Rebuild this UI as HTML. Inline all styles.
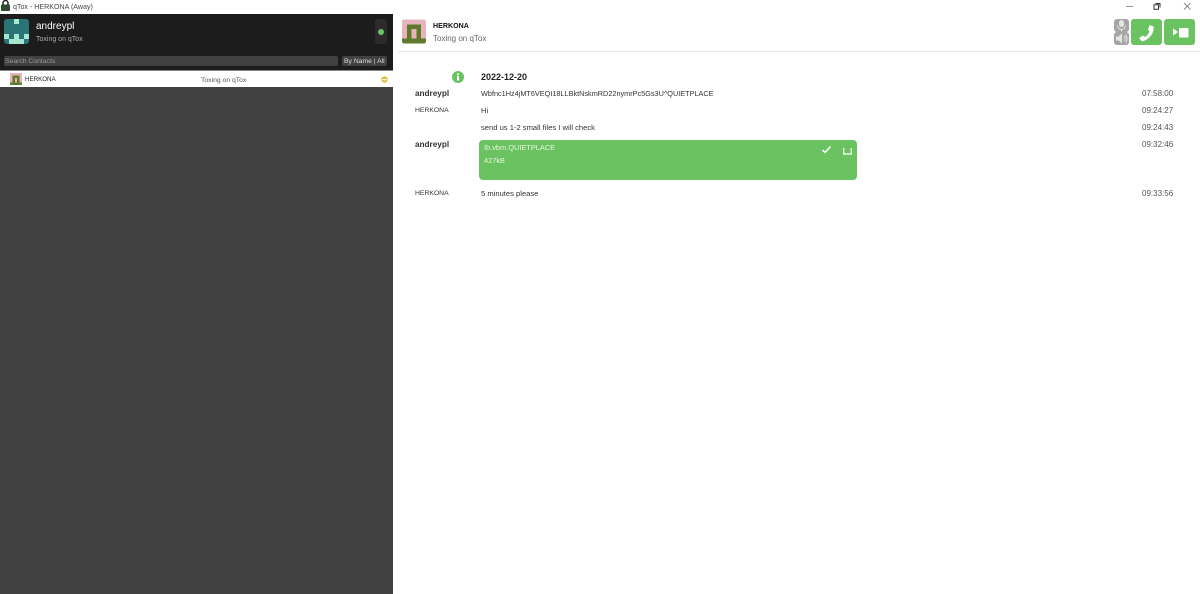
<!DOCTYPE html>
<html><head><meta charset="utf-8">
<style>
*{margin:0;padding:0;box-sizing:border-box}
html,body{width:1200px;height:594px;overflow:hidden;background:#fff;font-family:"Liberation Sans",sans-serif;color:#222}
.t{position:absolute;white-space:nowrap;font-size:7.5px;line-height:12px}
.b{position:absolute}
</style></head><body>
<svg class="b" style="left:1px;top:0" width="9" height="11" viewBox="0 0 9 11"><path d="M2 5V3a2.500 2.500 0 0 1 5 0v2" fill="none" stroke="#222" stroke-width="1.500"/><rect x="0" y="4.500" width="9" height="6.500" rx="1" fill="#2f4a2c"/></svg>
<div class="t" style="left:13px;top:1px;color:#444;font-size:7.100px">qTox - HERKONA (Away)</div>

<div class="b" style="left:0;top:14px;width:393px;height:56px;background:#1c1c1c"></div>
<div class="b" style="left:0;top:70px;width:393px;height:1px;background:#888"></div>
<svg class="b" style="left:4px;top:19px;border-radius:3px" width="25" height="25" viewBox="0 0 5 5" shape-rendering="crispEdges"><rect width="5" height="5" fill="#2a7478"/><rect x="2" y="0" width="1" height="1" fill="#a5e6cf"/><rect x="0" y="3" width="1" height="1" fill="#a5e6cf"/><rect x="4" y="3" width="1" height="1" fill="#a5e6cf"/><rect x="2" y="3" width="1" height="1" fill="#a5e6cf"/><rect x="1" y="4" width="3" height="1" fill="#a5e6cf"/></svg>
<div class="t" style="left:36px;top:21px;color:#fff;font-size:10px">andreypl</div>
<div class="t" style="left:36px;top:34px;color:#aaa;font-size:7px">Toxing on qTox</div>
<div class="b" style="left:375px;top:19px;width:12px;height:25px;background:#2b2b2b;border-radius:3px"></div>
<div class="b" style="left:378px;top:29px;width:6px;height:6px;background:#6bc260;border-radius:50%"></div>
<div class="b" style="left:4px;top:56px;width:334px;height:10px;background:#414141;border-radius:2px"></div>
<div class="t" style="left:5px;top:56px;color:#999;font-size:6.800px">Search Contacts</div>
<div class="b" style="left:342px;top:56px;width:45px;height:10px;background:#414141;border-radius:2px"></div>
<div class="t" style="left:344px;top:56px;color:#ddd;font-size:6.800px">By Name | All</div>

<div class="b" style="left:0;top:71px;width:393px;height:16px;background:#fff"></div>
<svg class="b" style="left:10px;top:73px;border-radius:1px" width="12" height="12" viewBox="0 0 5 5" shape-rendering="crispEdges"><rect width="5" height="5" fill="#e8b4bc"/><rect x="1" y="1" width="3" height="1" fill="#5f7a2c"/><rect x="1" y="1" width="1" height="3" fill="#5f7a2c"/><rect x="3" y="1" width="1" height="3" fill="#5f7a2c"/><rect x="0" y="4" width="5" height="1" fill="#5f7a2c"/></svg>
<div class="t" style="left:25px;top:74px;color:#222;font-size:6.200px">HERKONA</div>
<div class="t" style="left:201px;top:75px;color:#555;font-size:6.800px">Toxing on qTox</div>
<svg class="b" style="left:381px;top:76px" width="7" height="7" viewBox="0 0 7 7"><circle cx="3.500" cy="3.500" r="3.200" fill="#dcc040"/><rect x="1.500" y="3" width="4" height="1.200" fill="#fff"/></svg>
<div class="b" style="left:0;top:87px;width:393px;height:507px;background:#414141"></div>

<svg class="b" style="left:402px;top:19px;border-radius:3px" width="24" height="25" viewBox="0 0 5 5" shape-rendering="crispEdges"><rect width="5" height="5" fill="#e8b4bc"/><rect x="1" y="1" width="3" height="1" fill="#5f7a2c"/><rect x="1" y="1" width="1" height="3" fill="#5f7a2c"/><rect x="3" y="1" width="1" height="3" fill="#5f7a2c"/><rect x="0" y="4" width="5" height="1" fill="#5f7a2c"/></svg>
<div class="t" style="left:433px;top:20px;color:#111;font-size:7.100px;font-weight:bold">HERKONA</div>
<div class="t" style="left:433px;top:33px;color:#666;font-size:8px">Toxing on qTox</div>
<div class="b" style="left:398px;top:51px;width:802px;height:1px;background:#e8e8e8"></div>

<div class="b" style="left:1126px;top:6px;width:7px;height:1px;background:#999"></div>
<svg class="b" style="left:1153px;top:2px" width="8" height="8" viewBox="0 0 8 8"><path d="M2.500 1.500h4.500v4M1 2.800h4.500v4.400H1z" fill="none" stroke="#333" stroke-width="1"/></svg>
<svg class="b" style="left:1183px;top:2px" width="8" height="8" viewBox="0 0 8 8"><path d="M1 1l6.500 6.500M7.500 1L1 7.500" stroke="#555" stroke-width=".7"/></svg>

<svg class="b" style="left:1114px;top:19px" width="15" height="13" viewBox="0 0 15 13"><rect width="15" height="13" rx="3" fill="#a5a5a5"/><rect x="5" y="1" width="5" height="7" rx="2.500" fill="#e4e4e4"/><path d="M3.500 6.500a4 4 0 0 0 8 0M7.500 10.500v2" stroke="#e4e4e4" fill="none"/></svg>
<svg class="b" style="left:1114px;top:32px" width="15" height="13" viewBox="0 0 15 13"><rect width="15" height="13" rx="3" fill="#a5a5a5"/><path d="M2 4.500h2.500L8 1.500v10L4.500 8.500H2z" fill="#e4e4e4"/><path d="M10 4a3.500 3.500 0 0 1 0 5M11.500 2.500a6 6 0 0 1 0 8" stroke="#e4e4e4" fill="none"/></svg>
<div class="b" style="left:1131px;top:19px;width:31px;height:26px;background:#6bc260;border-radius:3px"></div>
<svg class="b" style="left:1137px;top:22px" width="19" height="20" viewBox="0 0 19 20"><path d="M12.500 3L16.500 4.500C17.500 11 12 18 5 19.500L2 16L6 13.500L8 15C10 14 12 11 12.500 9L11 7.500z" fill="#fff"/></svg>
<div class="b" style="left:1164px;top:19px;width:31px;height:26px;background:#6bc260;border-radius:3px"></div>
<svg class="b" style="left:1172px;top:26px" width="17" height="12" viewBox="0 0 17 12"><path d="M1 2.500L6 6L1 9.500z" fill="#fff"/><rect x="7" y="2" width="9.500" height="9.500" fill="#fff"/></svg>

<svg class="b" style="left:452px;top:71px" width="12" height="12" viewBox="0 0 12 12"><circle cx="6" cy="6" r="6" fill="#6bc260"/><rect x="5" y="5" width="2" height="4.500" fill="#fff"/><rect x="5" y="2.500" width="2" height="1.700" fill="#fff"/></svg>
<div class="t" style="left:481px;top:71px;color:#222;font-size:9px;font-weight:bold">2022-12-20</div>

<div class="t" style="left:415px;top:88px;font-weight:bold;font-size:8.200px;color:#333">andreypl</div>
<div class="t" style="left:481px;top:88px;color:#333;font-size:7.300px">Wbfnc1Hz4jMT6VEQI18LLBktNskmRD22nymrPc5Gs3U^QUIETPLACE</div>
<div class="t" style="left:1142px;top:88px;color:#555;font-size:8px">07:58:00</div>

<div class="t" style="left:415px;top:105px;font-size:6.800px;color:#333">HERKONA</div>
<div class="t" style="left:481px;top:105px;color:#333;font-size:7.600px">Hi</div>
<div class="t" style="left:1142px;top:105px;color:#555;font-size:8px">09:24:27</div>

<div class="t" style="left:481px;top:122px;color:#333;font-size:7.600px">send us 1-2 small files I will check</div>
<div class="t" style="left:1142px;top:122px;color:#555;font-size:8px">09:24:43</div>

<div class="t" style="left:415px;top:139px;font-weight:bold;color:#333;font-size:8.200px">andreypl</div>
<div class="b" style="left:479px;top:140px;width:378px;height:40px;background:#6bc260;border-radius:4px"></div>
<div class="t" style="left:484px;top:142px;color:#e8f8e4;font-size:7.400px">Ib.vbm.QUIETPLACE</div>
<div class="t" style="left:484px;top:155px;color:#e8f8e4;font-size:7.400px">427kB</div>
<svg class="b" style="left:821px;top:145px" width="11" height="9" viewBox="0 0 11 9"><path d="M1.500 5l2.500 2.500 5.500-6" fill="none" stroke="#fff" stroke-width="1.500"/></svg>
<svg class="b" style="left:843px;top:148px" width="9" height="7" viewBox="0 0 9 7"><path d="M.7 0v6h7.600V0" fill="none" stroke="#e8f8e4" stroke-width="1.400"/></svg>
<div class="t" style="left:1142px;top:139px;color:#555;font-size:8px">09:32:46</div>

<div class="t" style="left:415px;top:188px;font-size:6.800px;color:#333">HERKONA</div>
<div class="t" style="left:481px;top:188px;color:#333;font-size:7.600px">5 minutes please</div>
<div class="t" style="left:1142px;top:188px;color:#555;font-size:8px">09:33:56</div>
</body></html>
